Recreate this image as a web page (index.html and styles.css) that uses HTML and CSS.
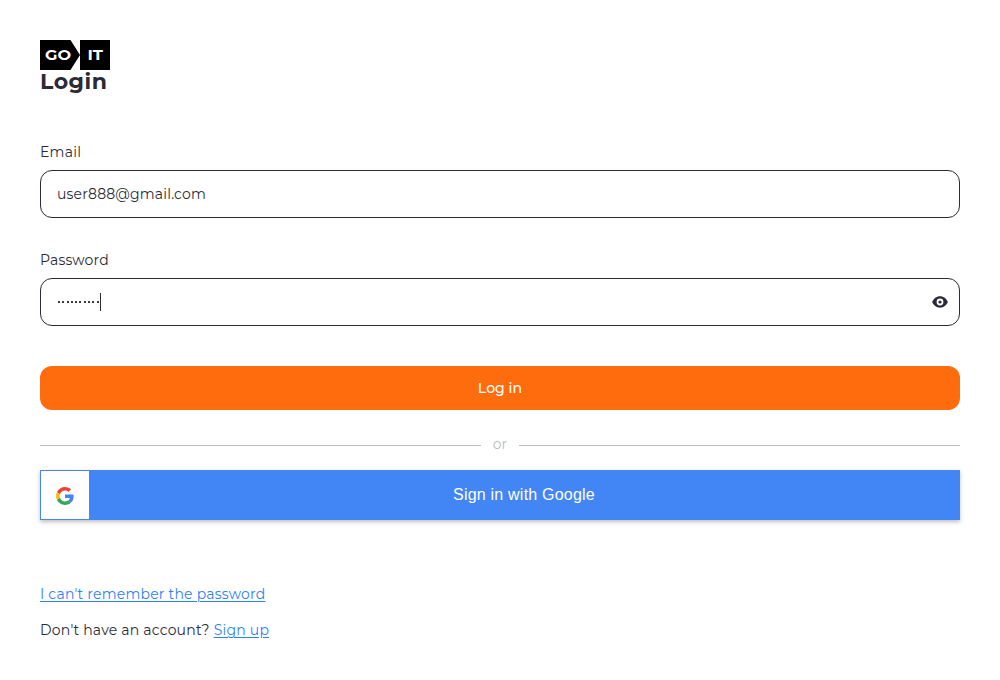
FILE: index.html
```html
<!DOCTYPE html>
<html lang="en">
<head>
<meta charset="utf-8">
<title>Login</title>
<link rel="stylesheet" href="styles.css">
</head>
<body>
<main class="login">
  <svg class="logo" width="70" height="30" viewBox="0 0 70 30" role="img" aria-label="GoIT">
    <path d="M0 0H30.500L40 15L30.500 30H0ZM40 0H70V30H40Z" fill="#000"/>
    <text class="logo-text" x="5" y="20" textLength="26" lengthAdjust="spacingAndGlyphs">GO</text>
    <text class="logo-text" x="47.500" y="20" textLength="15.500" lengthAdjust="spacingAndGlyphs">IT</text>
  </svg>
  <h1 class="title">Login</h1>
  <form class="form">
    <div class="label label-email">Email</div>
    <div class="field"><span class="value">user888@gmail.com</span></div>
    <div class="label label-password">Password</div>
    <div class="field">
      <span class="dots"><i></i><i></i><i></i><i></i><i></i><i></i><i></i><i></i><i></i><i></i></span><span class="caret"></span>
      <svg class="eye" width="16" height="12" viewBox="0 0 16 12">
        <path d="M8 .3C4.400 .3 1.500 2.600 .2 6c1.300 3.400 4.200 5.700 7.800 5.700s6.500-2.300 7.800-5.700C14.500 2.600 11.600 .3 8 .3Z" fill="#2a2b37"/>
        <circle cx="8" cy="6" r="2.500" fill="#2a2b37" stroke="#fff" stroke-width="1.800"/>
      </svg>
    </div>
    <button class="submit" type="button"><span>Log in</span></button>
  </form>
  <div class="divider"><span class="or">or</span></div>
  <div class="google">
    <div class="google-icon">
      <svg width="18" height="18" viewBox="0 0 48 48">
        <path fill="#EA4335" d="M24 9.500c3.540 0 6.710 1.220 9.210 3.600l6.850-6.850C35.900 2.380 30.470 0 24 0 14.620 0 6.510 5.380 2.560 13.220l7.980 6.190C12.430 13.720 17.740 9.500 24 9.500z"/>
        <path fill="#4285F4" d="M46.980 24.550c0-1.570-.15-3.090-.38-4.550H24v9.020h12.940c-.58 2.960-2.260 5.480-4.780 7.180l7.730 6c4.510-4.180 7.090-10.360 7.090-17.650z"/>
        <path fill="#FBBC05" d="M10.530 28.590A14.500 14.500 0 0 1 9.770 24c0-1.600.27-3.140.76-4.590l-7.980-6.190A23.900 23.900 0 0 0 0 24c0 3.880.92 7.540 2.560 10.780l7.970-6.190z"/>
        <path fill="#34A853" d="M24 48c6.480 0 11.930-2.130 15.890-5.810l-7.730-6c-2.150 1.450-4.920 2.300-8.160 2.300-6.260 0-11.570-4.220-13.470-9.910l-7.980 6.190C6.510 42.620 14.620 48 24 48z"/>
      </svg>
    </div>
    <span class="google-text">Sign in with Google</span>
  </div>
  <p class="line line-forgot"><a class="link forgot" href="#">I can't remember the password</a></p>
  <p class="line"><span class="question">Don't have an account?</span><a class="link signup" href="#">Sign up</a></p>
</main>
</body>
</html>
```
FILE: styles.css
```css
* { box-sizing: border-box; }

body {
  margin: 0;
  background: #fff;
  color: #2a2b37;
  font-family: Montserrat, Inter, sans-serif;
  font-size: 14px;
}

.login { padding: 40px; }

.logo { display: block; }

.logo-text {
  fill: #fff;
  font-family: Montserrat, Inter, sans-serif;
  font-size: 13.5px;
  font-weight: 700;
}

.title {
  margin: 0 0 50px;
  font-size: 22px;
  font-weight: 700;
  line-height: 24px;
  letter-spacing: 0.5px;
}

.label { height: 17px; line-height: 17px; margin-bottom: 9px; }
.label-email { letter-spacing: 0.25px; }
.label-password { margin-top: 34px; letter-spacing: 0.17px; }

.field {
  display: flex;
  align-items: center;
  height: 48px;
  padding: 0 11px 0 16px;
  border: 1px solid #2a2b37;
  border-radius: 12px;
}

.value { letter-spacing: 0.18px; }
.dots { display: flex; gap: 2.300px; padding-left: 1px; }
.dots i { width: 2px; height: 2px; border-radius: 0.5px; background: #2a2b37; }
.caret { width: 1px; height: 18px; margin-left: 1px; background: #2a2b37; }
.eye { margin-left: auto; }

.submit {
  display: block;
  width: 100%;
  height: 44px;
  margin-top: 40px;
  padding: 0;
  border: 0;
  border-radius: 12px;
  background: #ff6c0d;
  color: #fff;
  font: 500 14px/44px Montserrat, Inter, sans-serif;
  letter-spacing: 0.05px;
}

.divider {
  display: flex;
  align-items: center;
  gap: 12px;
  height: 20px;
  margin: 25px 0 15px;
  color: #bdbdbd;
}
.divider::before, .divider::after { content: ""; flex: 1; height: 1px; background: #bdbdbd; }
.or { line-height: 18px; margin-top: -2px; }

.google {
  display: flex;
  height: 50px;
  border: 1px solid #4285f4;
  background: #4285f4;
  box-shadow: 0 2px 4px rgba(0, 0, 0, 0.25);
}
.google-icon {
  display: flex;
  align-items: center;
  justify-content: center;
  width: 48px;
  padding-top: 2px;
  background: #fff;
}
.google-text {
  flex: 1;
  color: #fff;
  font: 16px/48px "Liberation Sans", Arial, sans-serif;
  letter-spacing: 0.21px;
  text-align: center;
}

.line { height: 18px; margin: 0 0 18px; line-height: 18px; }
.line-forgot { margin-top: 65px; }
.link { color: #2f7ff5; text-decoration: underline; text-underline-offset: 2px; }
.forgot { letter-spacing: 0.21px; }
.question { margin-right: 4px; letter-spacing: 0.2px; }
.signup { letter-spacing: 0.2px; }
```
